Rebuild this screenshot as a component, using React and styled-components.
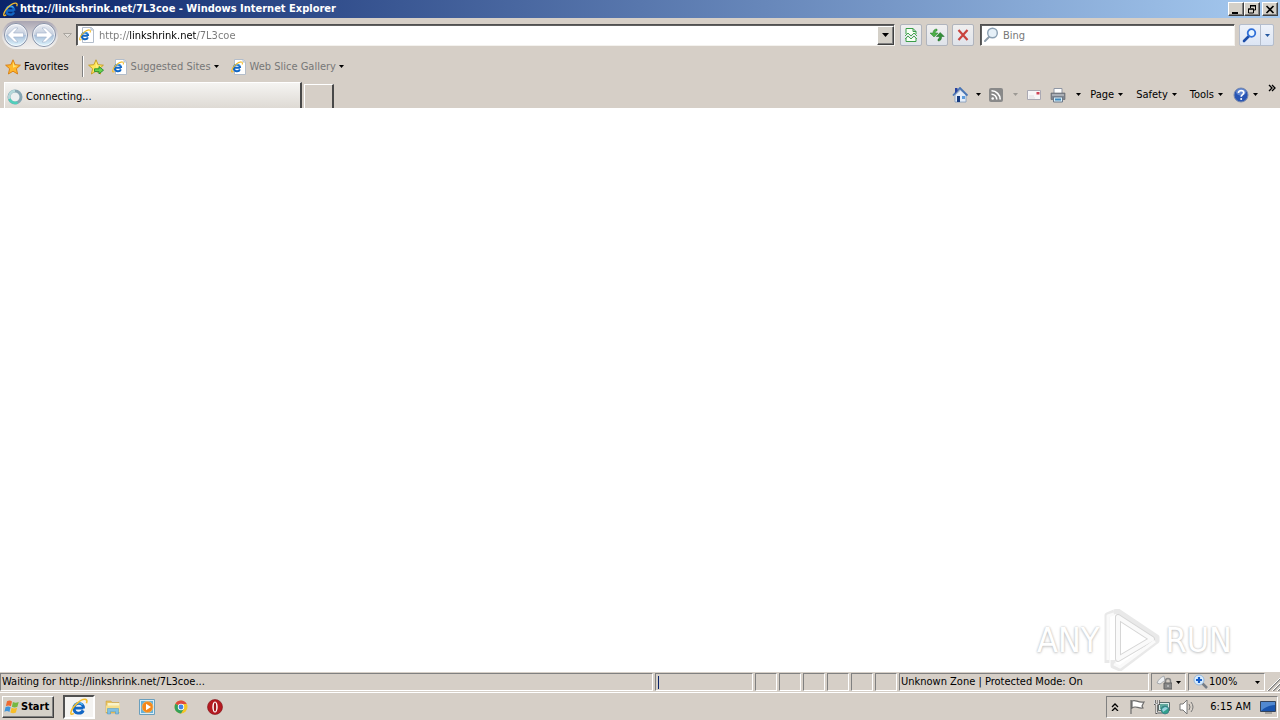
import React from 'react';
import styled, { createGlobalStyle, css } from 'styled-components';

const GlobalStyle = createGlobalStyle`
  * { box-sizing: border-box; }
  body { margin: 0; background: #fff; }
  body, button, input { font-family: "DejaVu Sans Condensed", "DejaVu Sans", sans-serif; font-size: 11px; line-height: 14px; color: #000; }
  button { margin: 0; padding: 0; border: 0; background: none; }
  svg { display: block; flex: none; }
`;

const face = '#d4d0c8';
const raised = css`
  border: 1px solid;
  border-color: #fff #404040 #404040 #fff;
  box-shadow: inset -1px -1px #808080;
`;
const sunken = css`
  border: 1px solid;
  border-color: #808080 #fff #fff #808080;
`;

const Window = styled.div`
  display: flex;
  flex-direction: column;
  min-height: 100vh;
  background: #d6cfc7;
`;
const TitleBar = styled.header`
  display: flex;
  align-items: center;
  height: 18px;
  padding: 0 2px 0 3px;
  gap: 2px;
  color: #fff;
  background: linear-gradient(to right, #0a246a, #a6caf0);
`;
const Title = styled.h1`
  flex: 1;
  margin: 0;
  font-size: 11px;
  line-height: 16px;
  font-weight: bold;
  white-space: nowrap;
`;
const WindowButtons = styled.div`
  display: flex;
`;
const CaptionButton = styled.button`
  ${raised}
  display: grid;
  place-items: center;
  width: 16px;
  height: 14px;
  margin-left: ${p => (p.$apart ? '2px' : '0')};
  background: ${face};
`;
const NavBar = styled.nav`
  display: flex;
  align-items: center;
  height: 34px;
  padding: 0 6px 0 2px;
`;
const RoundButtons = styled.div`
  display: flex;
  height: 28px;
  border-radius: 14px;
  background: linear-gradient(#a9a5b2, #c9c6cc 35%, #e4e1e0 60%, #f2f0ee);
`;
const RoundButton = styled.button`
  width: 28px;
  height: 28px;
`;
const MenuArrow = styled.button`
  display: grid;
  place-items: center;
  width: ${p => p.$wide || 18}px;
  height: 20px;
`;
const Field = styled.label`
  display: flex;
  align-items: center;
  flex: ${p => (p.$width ? `0 0 ${p.$width}px` : 1)};
  height: 22px;
  padding-left: 2px;
  gap: 4px;
  border: 1px solid;
  border-color: #505050 #f4f2ee #f4f2ee #505050;
  box-shadow: inset 1px 1px #606060;
  background: #fff;
`;
const TextInput = styled.input`
  flex: 1;
  min-width: 0;
  height: 18px;
  padding: 0;
  border: 0;
  outline: 0;
  color: #777;
  background: none;
  &::placeholder { color: #777; opacity: 1; }
`;
const AddressInput = styled(TextInput)`
  background: linear-gradient(to right, #777 30px, #000 30px 97px, #777 97px);
  background-clip: text;
  -webkit-text-fill-color: transparent;
`;
const DropButton = styled.button`
  ${raised}
  display: grid;
  place-items: center;
  width: 17px;
  height: 19px;
  background: ${face};
`;
const Tools = styled.div`
  display: flex;
  gap: 4px;
  margin: 0 6px 0 5px;
`;
const ToolButton = styled.button`
  display: grid;
  place-items: center;
  width: 22px;
  height: 22px;
  border: 1px solid #b0b4bd;
  border-radius: 2px;
  background: linear-gradient(#f0efef, #dfe3ea);
`;
const SearchButtons = styled.div`
  display: flex;
  margin-left: 4px;
  border: 1px solid #b4bdcc;
  border-radius: 2px;
  background: linear-gradient(#eef2f9, #dce5f4);
`;
const SearchPart = styled.button`
  display: grid;
  place-items: center;
  width: ${p => (p.$narrow ? 13 : 20)}px;
  height: 20px;
  border-left: ${p => (p.$narrow ? '1px solid #b4bdcc' : '0')};
`;
const FavoritesBar = styled.div`
  display: flex;
  align-items: center;
  height: 29px;
  padding-left: 5px;
`;
const BarButton = styled.button`
  display: flex;
  align-items: center;
  gap: ${p => p.$gap || 3}px;
  height: 20px;
  color: ${p => (p.$muted ? '#777' : '#000')};
  margin-right: ${p => p.$after || 0}px;
  white-space: nowrap;
`;
const Divider = styled.span`
  width: 2px;
  height: 21px;
  margin: 0 4px 0 13px;
  border-left: 1px solid #808080;
  border-right: 1px solid #fff;
`;
const TabRow = styled.div`
  display: flex;
  align-items: flex-end;
  height: 27px;
  padding-left: 4px;
`;
const Tab = styled.button`
  display: flex;
  align-items: center;
  gap: 3px;
  width: 298px;
  height: 26px;
  padding: 2px 0 0 2px;
  border: solid;
  border-width: 1px 2px 0 1px;
  border-color: #fff #484848 #fff #fff;
  background: linear-gradient(to bottom, #f5f4f2, #dedad4);
`;
const NewTab = styled.button`
  width: 30px;
  height: 24px;
  margin-left: 2px;
  border: solid;
  border-width: 1px 2px 0 1px;
  border-color: #fff #484848 #fff #fff;
`;
const CommandBar = styled.div`
  display: flex;
  align-items: center;
  height: 27px;
  margin-left: auto;
  padding-right: 4px;
`;
const Command = styled(BarButton)`
  gap: 4px;
  margin-right: ${p => (p.$after === undefined ? 13 : p.$after)}px;
`;
const Overflow = styled.button`
  align-self: flex-start;
  height: 14px;
  margin-left: 10px;
`;
const Page = styled.main`
  position: relative;
  flex: 1;
  background: #fff;
`;
const Watermark = styled.div`
  position: absolute;
  right: 48px;
  bottom: 0;
  display: flex;
  align-items: center;
  gap: 4px;
  height: 64px;
  font-size: 34px;
  line-height: 40px;
  color: #fff;
  text-shadow: 0 0 2px #bbb, 0 1px 3px #ccc;
`;
const StatusBar = styled.footer`
  display: flex;
  align-items: flex-end;
  gap: 2px;
  height: 21px;
  padding-bottom: 1px;
  border-bottom: 1px solid #fff;
`;
const Cell = styled.div`
  ${sunken}
  display: flex;
  align-items: center;
  flex: ${p => (p.$width ? `0 0 ${p.$width}px` : 1)};
  height: 18px;
  padding-left: 1px;
  white-space: nowrap;
`;
const Progress = styled.span`
  width: 1px;
  height: 13px;
  margin-left: 1px;
  background: #0a246a;
`;
const StatusButton = styled.button`
  display: flex;
  align-items: center;
  justify-content: space-between;
  flex: 1;
  padding: 0 4px 0 3px;
`;
const StatusLabel = styled.span`
  flex: 1;
  text-align: left;
`;
const TaskBar = styled.footer`
  display: flex;
  align-items: center;
  height: 27px;
  padding: 0 2px;
`;
const StartButton = styled.button`
  ${raised}
  display: flex;
  align-items: center;
  gap: 1px;
  width: 52px;
  height: 22px;
  padding-left: 1px;
  margin-right: 9px;
  font-weight: bold;
  background: ${face};
`;
const TaskButton = styled.button`
  display: grid;
  place-items: center;
  width: 34px;
  height: 24px;
  ${p => p.$active && css`
    width: 32px;
    margin-right: 1px;
    border: 2px solid;
    border-color: #505050 #fff #fff #505050;
    background: #f4f3f1;
  `}
`;
const Tray = styled.div`
  ${sunken}
  display: flex;
  align-items: center;
  justify-content: space-between;
  width: 172px;
  height: 22px;
  margin-left: auto;
  padding: 0 1px 0 3px;
`;
const TrayButton = styled.button`
  display: grid;
  place-items: center;
  min-width: 10px;
  height: 18px;
  white-space: nowrap;
`;
const Clock = styled.time`
  margin-left: 6px;
`;

const Svg = ({ w = 16, h = 16, box, children }) => (
  <svg width={w} height={h} viewBox={box || `0 0 ${w} ${h}`} aria-hidden="true">{children}</svg>
);
const Down = ({ color = '#000' }) => (
  <Svg w={5} h={3}><path d="M0 0h5L2.500 3z" fill={color} /></Svg>
);
const IeMark = () => (
  <>
    <path d="M11.800 9H4.500M12 9.300C12 3.300 3.600 3.300 3.600 9c0 5.600 6.800 5.500 8.100 2" fill="none" stroke="#1266c4" strokeWidth="2.600" />
    <path d="M4.200 6.500C5.500 3.800 9.500 3.600 11.200 6" fill="none" stroke="#4fb4f2" strokeWidth="1.200" />
    <path d="M3.400 13.700C1.600 14.900.5 14.700.8 13 1.600 8.300 9 .8 13.600 1.200c1.700.2 1.700 1.700 1 3.400" fill="none" stroke="#f3bd2e" strokeWidth="1.400" />
  </>
);
const Ie = ({ size = 16 }) => <Svg w={size} h={size} box="0 0 16 16"><IeMark /></Svg>;
const IePage = () => (
  <Svg>
    <path d="M3.500.5h9l2 2v13h-11z" fill="#fff" stroke="#b3bdca" />
    <path d="M12 .5v2.500h2.500" fill="#dce7f3" stroke="#b3bdca" />
    <g transform="translate(0 2) scale(.76)"><IeMark /></g>
  </Svg>
);
const Arrow = ({ flip }) => (
  <Svg w={28} h={28}>
    <defs>
      <linearGradient id={flip ? 'glassF' : 'glassB'} x2="0" y2="1">
        <stop offset="0" stopColor="#eef0f5" /><stop offset=".5" stopColor="#c3cddd" /><stop offset=".52" stopColor="#a9bfd9" /><stop offset="1" stopColor="#e2f8ff" />
      </linearGradient>
    </defs>
    <circle cx="14" cy="14" r="11.500" fill={`url(#${flip ? 'glassF' : 'glassB'})`} stroke="#8792a8" />
    <circle cx="14" cy="14" r="10.500" fill="none" stroke="#fff" opacity=".7" />
    <path transform={flip ? 'rotate(180 14 14)' : undefined} d="M5.500 14l7-7h3.500l-4.500 5h10v4h-10l4.500 5h-3.500z" fill="#fff" stroke="#9fb0c9" strokeWidth=".6" />
  </Svg>
);
const starPath = 'M8 .8l2.100 4.900 5.300.5-4 3.500 1.200 5.300L8 12.200 3.400 15l1.200-5.300-4-3.500 5.300-.5z';
const Star = ({ add }) => (
  <Svg>
    <path d={starPath} fill={add ? '#ffe65b' : '#ffb72b'} stroke={add ? '#c39b1e' : '#d77c10'} strokeWidth=".9" />
    <path d="M8 2.500l1.300 4 3.700.3-5 2z" fill="#fff08a" opacity=".8" />
    {add && <path d="M6.500 9.800h4.500v-2.300l4.500 3.700-4.500 3.700v-2.300H6.500z" fill="#69d44d" stroke="#16832a" strokeWidth=".8" />}
  </Svg>
);
const Lens = ({ pale }) => (
  <Svg>
    <path d="M2 14l5-5" stroke={pale ? '#8e9dab' : '#1c4da8'} strokeWidth={pale ? 2 : 2.600} strokeLinecap="round" />
    <circle cx="9.500" cy="6" r={pale ? 4.800 : 3.800} fill={pale ? '#e6f0f8' : '#e8f5ff'} stroke={pale ? '#8ba0b3' : '#2f6fd8'} strokeWidth={pale ? 1.400 : 1.800} />
  </Svg>
);
const Spinner = () => (
  <Svg>
    <circle cx="8" cy="8" r="6" fill="#eceff0" stroke="#86a5b2" strokeWidth="3" />
    <path d="M8 2a6 6 0 0 0-5.500 8" fill="none" stroke="#b5d8da" strokeWidth="2.500" />
    <path d="M2.500 10a6 6 0 0 0 8 3.500" fill="none" stroke="#4fd0bb" strokeWidth="2.500" />
  </Svg>
);
const Broken = () => (
  <Svg>
    <path d="M3 7V1.500h7l3 3V7M10 1.500v3h3M3 11v3.500h10V11" fill="#f7fff5" stroke="#3b9d48" />
    <path d="M2 9l3-3 3 3 3-3 3 3M2 12l3-3 3 3 3-3 3 3" fill="none" stroke="#47a84f" />
  </Svg>
);
const Refresh = () => (
  <Svg>
    <path d="M8 2C5.500 2 4 3.500 4 6H1l4 4 4-4H6.200c0-1.500.8-2 1.800-2z" fill="#4eaf48" stroke="#2b8130" strokeWidth=".5" />
    <path d="M9 14c2.500 0 3.600-1.500 3.600-4.500h2.600l-4-4-4 4h3.200c0 1.800-.6 2.500-1.400 2.500z" fill="#348f38" stroke="#1f6b27" strokeWidth=".5" />
  </Svg>
);
const Stop = () => <Svg><path d="M3.500 3l9 10M12.500 3l-9 10" stroke="#c9433d" strokeWidth="2.200" /></Svg>;
const Home = () => (
  <Svg>
    <path d="M3 8v7h11V8L8.500 3z" fill="#e5edf8" stroke="#8299ba" strokeWidth=".8" />
    <path d="M1 8.500L8 1l7.500 7.500" fill="none" stroke="#4875b5" strokeWidth="1.800" />
    <path d="M3 1h2.500v3L3 6.500z" fill="#2842a0" />
    <path d="M5 9h3v6H5z" fill="#163b81" /><path d="M10 9h3v3h-3z" fill="#5c9cdc" />
  </Svg>
);
const Feed = () => (
  <Svg>
    <rect x="1" y="1" width="14" height="14" rx="2" fill="#898989" />
    <circle cx="4.700" cy="11.500" r="1.300" fill="#fff" />
    <path d="M3.500 7.200a5.300 5.300 0 0 1 5.300 5.300M3.500 3.800a8.700 8.700 0 0 1 8.700 8.700" fill="none" stroke="#fff" strokeWidth="1.600" />
  </Svg>
);
const Mail = () => (
  <Svg><path d="M1.500 3.500h13v9h-13z" fill="#f7f6f8" stroke="#aaa9b3" /><path d="M3 9h5M3 11h6" stroke="#dcdce0" /><path d="M10.500 5h3v2.500h-3z" fill="#cf4256" /></Svg>
);
const Printer = () => (
  <Svg>
    <path d="M4 1.500h8v5H4z" fill="#fff" stroke="#9097a4" />
    <path d="M1 6h14v6.500H1z" fill="#81868f" stroke="#5e626a" strokeWidth=".6" />
    <path d="M2 8h12" stroke="#d4d8dd" /><path d="M3.500 10h9v5h-9z" fill="#d9eef8" stroke="#6d7988" /><path d="M5 12.500h6" stroke="#418abd" strokeWidth="2" />
  </Svg>
);
const Help = () => (
  <Svg>
    <circle cx="8" cy="8" r="7" fill="#2855b4" stroke="#7989ac" />
    <ellipse cx="8" cy="5" rx="5" ry="3.500" fill="#789bdd" opacity=".7" />
    <path d="M5.500 6c0-3.300 5.300-3 5.300-.2 0 2-2.600 1.700-2.600 4" fill="none" stroke="#fff" strokeWidth="1.700" /><circle cx="8.200" cy="12" r="1" fill="#fff" />
  </Svg>
);
const Windows = () => (
  <Svg>
    <path d="M3 2.300c2-1 3.500-.9 5 .2L6.900 7.200c-1.500-1-3-1.100-5-.2z" fill="#ee6a31" />
    <path d="M8.900 3c1.800 1 3.500 1 5.800.1l-1.300 4.700c-2 .9-3.800.8-5.500-.1z" fill="#75b843" />
    <path d="M1.600 8c2-.9 3.500-.8 5 .2l-1.200 4.700c-1.500-1-3.100-1-5-.2z" fill="#3e94db" />
    <path d="M7.600 8.700c1.800 1 3.500 1 5.500.1l-1.200 4.700c-2 .9-3.800.8-5.500-.1z" fill="#f7bd28" />
  </Svg>
);
const Explorer = () => (
  <Svg><path d="M1 2h5l1 1.500h7V14H1z" fill="#e8c25f" stroke="#c79b39" strokeWidth=".5" /><path d="M2.500 4h12v4h-12z" fill="#f9f3c9" /><path d="M1 6.500h14V13H1z" fill="#f6de8a" /><path d="M2.500 15v-5.500h11V15h-3v-2.500h-5V15z" fill="#7fbfe3" stroke="#4795c6" strokeWidth=".5" /></Svg>
);
const Media = () => (
  <Svg><path d="M.5.500h15v15H.5z" fill="#d9edf7" stroke="#6a9fbd" /><path d="M2 2h12v12H2z" fill="#67b1d8" /><circle cx="8.500" cy="8" r="5.500" fill="#f58719" stroke="#f7bc65" strokeWidth=".7" /><path d="M7 4.800l5 3.200-5 3.200z" fill="#fff" /></Svg>
);
const Chrome = () => (
  <Svg><circle cx="8" cy="8" r="6.500" fill="#f5c526" /><path d="M8 8L2.400 4.800A6.500 6.500 0 0 1 13.700 5H8z" fill="#df4a3e" /><path d="M8 8L2.400 4.800A6.500 6.500 0 0 0 8 14.500L10.700 10z" fill="#34a05a" /><circle cx="8" cy="8" r="3.200" fill="#fff" /><circle cx="8" cy="8" r="2.400" fill="#4285e4" /></Svg>
);
const Opera = () => (
  <Svg><circle cx="8" cy="8" r="7.500" fill="#b51a21" stroke="#7d1015" strokeWidth=".6" /><ellipse cx="8" cy="8" rx="2.700" ry="5.500" fill="#fff" /><ellipse cx="8" cy="8" rx="1.200" ry="4.600" fill="#a0161b" /></Svg>
);
const Privacy = () => (
  <Svg><path d="M1 9c1-3 4-6 7-7l1 5c-2 0-3 2-5 3z" fill="#eef0f2" stroke="#a6a9ad" /><path d="M9.500 9V7a2.500 2.500 0 0 1 5 0v2" fill="none" stroke="#858585" strokeWidth="1.500" /><path d="M8 9h8v6H8z" fill="#888" stroke="#626262" /><path d="M12 11v2" stroke="#ddd" /></Svg>
);
const ZoomIn = () => (
  <Svg><path d="M9 9l5 5" stroke="#777e86" strokeWidth="2.500" /><circle cx="6" cy="6" r="5" fill="#d8edff" stroke="#97b8da" /><path d="M3 6h6M6 3v6" stroke="#155ecb" strokeWidth="2.200" /></Svg>
);
const Flag = () => <Svg><path d="M2 15V1M3 2c4-2 5 2 12 1l-2 4 1 2c-5 1-7-3-11 0z" fill="#fff" stroke="#6d6d6d" strokeWidth="1.200" /></Svg>;
const Network = () => (
  <Svg><path d="M4.500 3.500h11v8h-11z" fill="#d9ece8" stroke="#596c6c" /><path d="M6 5h8v5H6z" fill="#60aa9e" /><circle cx="11" cy="11" r="4" fill="#31a18b" stroke="#3b6f83" strokeWidth=".7" /><path d="M8 10l3-2 3 1-2 2-3 2z" fill="#9ad1df" /><path d="M.7 1v4h4V1M2.700 5v9h5" fill="none" stroke="#333" strokeWidth="2.200" /><path d="M.7 1v4h4V1M2.700 5v9h5" fill="none" stroke="#fff" /></Svg>
);
const Speaker = () => <Svg><path d="M1 5h3l4-4v14l-4-4H1z" fill="#fff" stroke="#777" /><path d="M10 5q2 3 0 6M12 3q4 5 0 10" fill="none" stroke="#777" /></Svg>;
const Monitor = () => <Svg><path d="M.5 2.500h15v10H.5z" fill="#1954ad" stroke="#34445c" /><path d="M1 3h14v3Q7 6 1 12z" fill="#5189d1" /><path d="M5 14h7" stroke="#777" /></Svg>;
const Chevrons = ({ up }) => (
  <Svg w={8} h={8}><path d={up ? 'M1 4l3-3 3 3M1 8l3-3 3 3' : 'M1 1l3 3-3 3M4 1l3 3-3 3'} fill="none" stroke="#000" strokeWidth="1.300" /></Svg>
);

const emptyCells = [1, 2, 3, 4, 5, 6];

export default function App() {
  return (
    <Window>
      <GlobalStyle />
      <TitleBar>
        <Ie size={15} />
        <Title>http://linkshrink.net/7L3coe - Windows Internet Explorer</Title>
        <WindowButtons>
          <CaptionButton aria-label="Minimize"><Svg w={10} h={9}><path d="M1 7h6v2H1z" /></Svg></CaptionButton>
          <CaptionButton aria-label="Restore"><Svg w={10} h={9}><path d="M3.500 3V1h5v4H7M1.500 4h5v4h-5z" fill="none" stroke="#000" /><path d="M3 .5h6M1 4h6" stroke="#000" /></Svg></CaptionButton>
          <CaptionButton aria-label="Close" $apart><Svg w={10} h={9}><path d="M1.500 1l7 7M8.500 1l-7 7" stroke="#000" strokeWidth="1.600" /></Svg></CaptionButton>
        </WindowButtons>
      </TitleBar>
      <NavBar>
        <RoundButtons>
          <RoundButton aria-label="Back"><Arrow /></RoundButton>
          <RoundButton aria-label="Forward"><Arrow flip /></RoundButton>
        </RoundButtons>
        <MenuArrow aria-label="Recent pages">
          <Svg w={9} h={5}><path d="M.5.5h8l-4 4z" fill="#e4e0da" stroke="#aaa6a0" /></Svg>
        </MenuArrow>
        <Field>
          <IePage />
          <AddressInput aria-label="Address" defaultValue="http://linkshrink.net/7L3coe" />
          <DropButton aria-label="Show addresses"><Svg w={7} h={4}><path d="M0 0h7L3.500 4z" /></Svg></DropButton>
        </Field>
        <Tools>
          <ToolButton aria-label="Compatibility view"><Broken /></ToolButton>
          <ToolButton aria-label="Refresh"><Refresh /></ToolButton>
          <ToolButton aria-label="Stop"><Stop /></ToolButton>
        </Tools>
        <Field $width={255}>
          <Lens pale />
          <TextInput aria-label="Search" placeholder="Bing" />
        </Field>
        <SearchButtons>
          <SearchPart aria-label="Search"><Lens /></SearchPart>
          <SearchPart aria-label="Search options" $narrow><Down color="#24589f" /></SearchPart>
        </SearchButtons>
      </NavBar>
      <FavoritesBar>
        <BarButton><Star />Favorites</BarButton>
        <Divider />
        <BarButton aria-label="Add to favorites bar" $after={8}><Star add /></BarButton>
        <BarButton $muted $after={12}><IePage />Suggested Sites<Down /></BarButton>
        <BarButton $muted><IePage />Web Slice Gallery<Down /></BarButton>
      </FavoritesBar>
      <TabRow>
        <Tab><Spinner />Connecting...</Tab>
        <NewTab aria-label="New tab" />
        <CommandBar>
          <Command aria-label="Home" $after={0}><Home /></Command>
          <MenuArrow $wide={20} aria-label="Home options"><Down /></MenuArrow>
          <Command aria-label="Feeds" $after={0}><Feed /></Command>
          <MenuArrow $wide={22} aria-label="Feed options"><Down color="#9c9994" /></MenuArrow>
          <Command aria-label="Read mail" $after={8}><Mail /></Command>
          <Command aria-label="Print" $after={0}><Printer /></Command>
          <MenuArrow $wide={24} aria-label="Print options"><Down /></MenuArrow>
          <Command>Page<Down /></Command>
          <Command>Safety<Down /></Command>
          <Command $after={10}>Tools<Down /></Command>
          <Command aria-label="Help" $after={0}><Help /><Down /></Command>
          <Overflow aria-label="More commands"><Chevrons /></Overflow>
        </CommandBar>
      </TabRow>
      <Page>
        <Watermark>
          <span>ANY</span>
          <Svg w={58} h={62}>
            <g fill="none" strokeLinejoin="round">
              <path d="M4 54V6l7-3M11 3l4-1 39 26v4L17 60l-7-3v-6" stroke="#e9e9e9" strokeWidth="5" />
              <path d="M15 8v42l34-20L15 8z" stroke="#d6d6d6" strokeWidth="6" />
              <path d="M15 8v42l34-20L15 8z" stroke="#fafafa" strokeWidth="4" />
              <path d="M5 51V7l6-2M11 55l6 3 35-26" stroke="#fafafa" strokeWidth="3" />
            </g>
          </Svg>
          <span>RUN</span>
        </Watermark>
      </Page>
      <StatusBar>
        <Cell>Waiting for http://linkshrink.net/7L3coe...</Cell>
        <Cell $width={98}><Progress /></Cell>
        {emptyCells.map(n => <Cell key={n} $width={22} />)}
        <Cell $width={250}>Unknown Zone | Protected Mode: On</Cell>
        <Cell $width={35}><StatusButton aria-label="Privacy report"><Privacy /><Down /></StatusButton></Cell>
        <Cell $width={77}><StatusButton><ZoomIn /><StatusLabel>100%</StatusLabel><Down /></StatusButton></Cell>
        <Svg w={13} h={16}><path d="M1 16L14 3M6 16l8-8M11 16l3-3" stroke="#808080" strokeWidth="1.500" /><path d="M0 16L13 3M5 16l8-8M10 16l3-3" stroke="#fff" /></Svg>
      </StatusBar>
      <TaskBar>
        <StartButton><Windows />Start</StartButton>
        <TaskButton $active aria-label="Internet Explorer"><Ie size={18} /></TaskButton>
        <TaskButton aria-label="Windows Explorer"><Explorer /></TaskButton>
        <TaskButton aria-label="Media Player"><Media /></TaskButton>
        <TaskButton aria-label="Chrome"><Chrome /></TaskButton>
        <TaskButton aria-label="Opera"><Opera /></TaskButton>
        <Tray>
          <TrayButton aria-label="Show hidden icons"><Chevrons up /></TrayButton>
          <TrayButton aria-label="Action Center"><Flag /></TrayButton>
          <TrayButton aria-label="Network"><Network /></TrayButton>
          <TrayButton aria-label="Volume"><Speaker /></TrayButton>
          <Clock>6:15 AM</Clock>
          <TrayButton aria-label="Show desktop"><Monitor /></TrayButton>
        </Tray>
      </TaskBar>
    </Window>
  );
}
